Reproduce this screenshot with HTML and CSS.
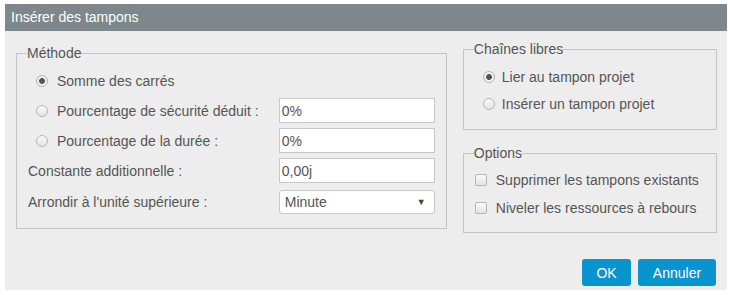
FILE: index.html
```html
<!DOCTYPE html>
<html lang="fr">
<head>
<meta charset="utf-8">
<title>Insérer des tampons</title>
<link rel="stylesheet" href="styles.css">
</head>
<body>
<div class="dialog">
  <div class="titlebar">Insérer des tampons</div>
  <div class="content">
    <fieldset class="group method">
      <legend>Méthode</legend>
      <div class="rows">
        <div class="row">
          <label class="radio-row"><input type="radio" name="m" checked><span>Somme des carrés</span></label>
        </div>
        <div class="row">
          <label class="radio-row"><input type="radio" name="m"><span>Pourcentage de sécurité déduit :</span></label>
          <input class="field" type="text" value="0%">
        </div>
        <div class="row">
          <label class="radio-row"><input type="radio" name="m"><span>Pourcentage de la durée :</span></label>
          <input class="field" type="text" value="0%">
        </div>
        <div class="row">
          <span class="plain">Constante additionnelle :</span>
          <input class="field" type="text" value="0,00j">
        </div>
        <div class="row select-row">
          <span class="plain">Arrondir à l'unité supérieure :</span>
          <div class="select"><span>Minute</span><span class="arrow">▼</span></div>
        </div>
      </div>
    </fieldset>
    <div class="side">
      <fieldset class="group chains">
        <legend>Chaînes libres</legend>
        <div class="list">
          <label class="radio-row"><input type="radio" name="c" checked><span>Lier au tampon projet</span></label>
          <label class="radio-row"><input type="radio" name="c"><span>Insérer un tampon projet</span></label>
        </div>
      </fieldset>
      <fieldset class="group options">
        <legend>Options</legend>
        <div class="list">
          <label class="check-row"><input type="checkbox"><span>Supprimer les tampons existants</span></label>
          <label class="check-row"><input type="checkbox"><span>Niveler les ressources à rebours</span></label>
        </div>
      </fieldset>
    </div>
  </div>
  <div class="buttons">
    <button class="btn ok">OK</button>
    <button class="btn cancel">Annuler</button>
  </div>
</div>
</body>
</html>
```
FILE: styles.css
```css
* { box-sizing: border-box; }
html, body { margin: 0; padding: 0; background: #fff; }
body { font-family: "Liberation Sans", Arial, sans-serif; font-size: 14px; color: #555; }

.dialog {
  margin: 4px 0 0 5px;
  width: 722px;
  height: 286px;
  background: #ededed;
  display: flex;
  flex-direction: column;
}
.titlebar {
  height: 27px;
  background: #7e878c;
  color: #fff;
  font-size: 14px;
  line-height: 27px;
  padding-left: 6px;
}
.content {
  display: flex;
  padding: 0 10px 0 11px;
  gap: 16px;
}
.group {
  border: 1px solid #c4c4c4;
  margin: 0;
  padding: 0;
  min-width: 0;
}
.group legend {
  padding: 0;
  margin-left: 10px;
  line-height: 16px;
  font-size: 14px;
}
.method {
  width: 432px;
  height: 184px;
  margin-top: 14px;
  padding: 0 11px 0 11px;
}
.method legend { margin-left: -1px; }
.rows {
  display: flex;
  flex-direction: column;
  gap: 5px;
  padding-top: 7px;
}
.row {
  height: 25px;
  display: flex;
  align-items: center;
  justify-content: space-between;
}
.row.select-row { margin-top: 2px; height: 24px; }
.radio-row, .check-row {
  display: flex;
  align-items: center;
  gap: 9px;
}
.method .radio-row { margin-left: 8px; }

input[type=radio] {
  appearance: none;
  -webkit-appearance: none;
  margin: 0;
  width: 12px;
  height: 12px;
  border: 1px solid #b5b5b5;
  border-radius: 50%;
  background: linear-gradient(#fafafa, #e4e4e4);
  flex: none;
}
input[type=radio]:checked {
  background: radial-gradient(circle, #555 0 2.6px, #f4f4f4 3.2px, #e4e4e4 100%);
}
input[type=checkbox] {
  appearance: none;
  -webkit-appearance: none;
  margin: 0;
  width: 12px;
  height: 12px;
  border: 1px solid #b5b5b5;
  border-radius: 2px;
  background: linear-gradient(#fafafa, #e2e2e2);
  flex: none;
}

.field {
  width: 156px;
  height: 25px;
  border: 1px solid #c8c8c8;
  background: #fff;
  font: inherit;
  color: #555;
  padding: 0 2px;
  margin: 0;
  outline: none;
}
.select {
  width: 156px;
  height: 24px;
  border: 1px solid #c8c8c8;
  border-radius: 3px;
  background: #fff;
  display: flex;
  align-items: center;
  justify-content: space-between;
  padding: 0 8px 0 5px;
}
.select .arrow { font-size: 9px; color: #444; }

.side {
  display: flex;
  flex-direction: column;
  width: 255px;
  padding-top: 10px;
  gap: 15px;
}
.chains { height: 89px; }
.options { height: 88px; }
.list {
  display: flex;
  flex-direction: column;
}
.chains .list { padding: 11px 0 0 19px; gap: 10px; }
.chains .radio-row { height: 17px; gap: 7px; }
.options .list { padding: 10px 0 0 11px; gap: 11px; }
.options .check-row { height: 17px; gap: 9px; }

.buttons {
  margin-top: auto;
  display: flex;
  justify-content: flex-end;
  gap: 7px;
  padding: 0 11px 4px 0;
}
.btn {
  height: 27px;
  border: 0;
  border-radius: 3px;
  background: #0993cf;
  color: #fff;
  font-family: inherit;
  font-size: 14px;
  padding: 0;
}
.ok { width: 49px; }
.cancel { width: 78px; }
```
